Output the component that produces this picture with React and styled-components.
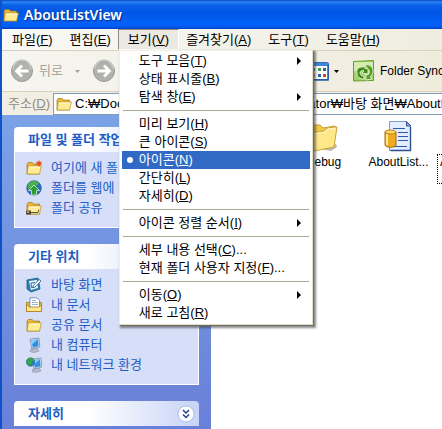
import React from 'react'
import styled, { createGlobalStyle } from 'styled-components'

const GlobalStyle = createGlobalStyle`
    * {
        box-sizing: border-box;
    }
    body {
        margin: 0;
        background: #fff;
    }
    body, button, input {
        font-family: "Liberation Sans", "Noto Sans CJK KR", sans-serif;
        font-size: 13px;
        line-height: 18px;
    }
`
const Window = styled.div`
    display: flex;
    flex-direction: column;
    min-height: 100vh;
    overflow: hidden;
    border-left: 2px solid #0d52c8;
    background: #fff;
`
const TitleBar = styled.header`
    display: flex;
    align-items: center;
    gap: 5px;
    height: 29px;
    padding-left: 1px;
    background: linear-gradient(#0a47c4 0, #2a86f5 2px, #0d62ea 5px, #0055e3 12px, #0260f6 22px, #0260fa 26px, #0141c0 29px);
`
const Title = styled.h1`
    margin: 0;
    color: #fff;
    font-family: "Noto Sans", sans-serif;
    font-size: 14px;
    font-weight: 600;
    line-height: 20px;
    text-shadow: 1px 1px 1px #0a2a8a;
`
const MenuBar = styled.nav`
    display: flex;
    height: 22px;
    border-bottom: 1px solid #d8d2bd;
    background: linear-gradient(90deg, #f8f8f6, #efede0);
`
const MenuWrap = styled.div`
    position: relative;
    display: flex;
    margin-right: -3px;
`
const MenuButton = styled.button`
    height: 21px;
    padding: 0 9px;
    border: 1px solid transparent;
    background: transparent;
    color: #000;
    line-height: 16px;
    white-space: nowrap;
    ${({open}) => open && `
        border-color: #8d8a80 #fff #fff #8d8a80;
        background: #ece9e2;
    `}
`
const Dropdown = styled.div`
    position: absolute;
    top: 100%;
    left: 1px;
    z-index: 2;
    width: 194px;
    padding: 1px 2px 2px;
    border: 1px solid #f1efe2;
    border-right-color: #dfdcc8;
    border-bottom-color: #dfdcc8;
    background: #fff;
    box-shadow: 1px 1px 0 #716f64, 2px 2px 2px 1px rgba(60, 60, 60, 0.6);
`
const DropdownItem = styled.button`
    display: grid;
    grid-template-columns: 17px 1fr 10px;
    align-items: center;
    width: 100%;
    height: 18px;
    padding: 0 3px 0 0;
    border: 0;
    background: ${({selected}) => selected ? '#316ac5' : 'transparent'};
    color: ${({selected}) => selected ? '#fff' : '#000'};
    text-align: left;
    white-space: nowrap;
`
const Bullet = styled.span`
    width: 6px;
    height: 6px;
    margin-left: 5px;
    border-radius: 50%;
    background: ${({on}) => on ? '#fff' : 'transparent'};
`
const Divider = styled.hr`
    height: 1px;
    margin: 4px 1px;
    border: 0;
    background: #aca899;
`
const ToolBar = styled.div`
    display: flex;
    align-items: center;
    justify-content: space-between;
    height: 41px;
    padding-left: 8px;
    border-bottom: 1px solid #d8d2bd;
    background: linear-gradient(90deg, #f6f5f0, #efecdc);
`
const ToolGroup = styled.div`
    display: flex;
    align-items: center;
    flex: none;
    gap: ${({gap}) => gap}px;
`
const ToolButton = styled.button`
    display: flex;
    align-items: center;
    gap: 5px;
    padding: 0;
    border: 0;
    background: transparent;
    color: ${({disabled}) => disabled ? '#a5a295' : '#000'};
    font-size: ${({small}) => small ? '12px' : '13px'};
    white-space: nowrap;
`
const SyncGroup = styled(ToolGroup)`
    width: 133px;
    overflow: hidden;
`
const ToolDivider = styled.span`
    width: 1px;
    height: 32px;
    background: #c9c5b2;
`
const AddressBar = styled.div`
    display: flex;
    align-items: center;
    gap: 5px;
    height: 23px;
    padding-left: 6px;
    background: #f1efe4;
`
const AddressLabel = styled.label`
    flex: none;
    width: 40px;
    color: #8f8c80;
    white-space: nowrap;
`
const AddressField = styled.div`
    display: flex;
    align-items: center;
    gap: 3px;
    flex: 1;
    min-width: 0;
    height: 22px;
    padding-left: 2px;
    border: 1px solid #7f9db9;
    border-right: 0;
    background: #fff;
`
const AddressInput = styled.input`
    flex: 1;
    min-width: 0;
    padding: 0;
    border: 0;
    outline: 0;
    background: transparent;
    color: #000;
`
const Content = styled.main`
    display: flex;
    flex: 1;
`
const SideBar = styled.aside`
    display: flex;
    flex-direction: column;
    flex: none;
    gap: 16px;
    width: 209px;
    padding: 12px 12px 0;
    background: linear-gradient(#7ba2e7, #6980d8);
`
const Panel = styled.section`
    overflow: hidden;
    border-radius: 4px 4px 0 0;
`
const PanelHeader = styled.div`
    display: flex;
    align-items: center;
    justify-content: space-between;
    height: 25px;
    padding: 0 4px 0 14px;
    background: linear-gradient(90deg, #fff 40%, #c6d3f7);
`
const PanelTitle = styled.h2`
    margin: 0;
    color: #215dc6;
    font-size: 13px;
    font-weight: 700;
    line-height: 18px;
    white-space: nowrap;
`
const ExpandButton = styled.button`
    display: flex;
    padding: 0;
    border: 0;
    background: transparent;
`
const TaskList = styled.ul`
    margin: 0;
    padding: 6px 0 9px 11px;
    border: 1px solid #fff;
    border-top: 0;
    background: #d6dff7;
    list-style: none;
`
const Task = styled.li`
    height: 20px;
`
const TaskLink = styled.a`
    display: flex;
    align-items: center;
    gap: 9px;
    height: 20px;
    color: #215dc6;
    text-decoration: none;
    white-space: nowrap;
`
const FileArea = styled.section`
    display: flex;
    flex: 1;
    min-width: 0;
    overflow: hidden;
    padding: 5px 0 0 75px;
`
const FileItem = styled.a`
    display: flex;
    flex-direction: column;
    align-items: center;
    flex: none;
    gap: 3px;
    width: 75px;
    color: #000;
    text-align: center;
    text-decoration: none;
`
const FileName = styled.span`
    max-width: 71px;
    outline: ${({focused}) => focused ? '1px dotted #000' : '0'};
    font-size: 12px;
    line-height: 14px;
    overflow-wrap: anywhere;
`

const FolderIcon = ({size = 16, children}) => (
  <svg width={size} height={size} viewBox="0 0 16 16" aria-hidden="true">
    <path d="M1 4.2 2.2 2.5h4l1.3 1.6h6V14H1z" fill="#e8b93c" stroke="#9c741a" strokeWidth=".7" />
    <path d="M2.2 6h13.2l-1.8 8H1.1z" fill="#ffec94" stroke="#b98d25" strokeWidth=".7" strokeLinejoin="round" />
    <path d="M3 7h11" stroke="#fffbd9" />
    {children}
  </svg>
)

const BigFolderIcon = () => (
  <svg width="32" height="32" viewBox="0 0 32 32" aria-hidden="true">
    <path d="M7 28 23 31l6-4-1-3z" fill="#b9b9b9" />
    <path d="M2 9 4 5h8l3 3 12-2 1 3-3 18-19 3z" fill="#efc74c" stroke="#c89b2a" />
    <path d="m3 13 13-2 3-3 10-1-3 20-20 4z" fill="#ffe88a" stroke="#d0a535" strokeLinejoin="round" />
    <path d="m5 14 12-2 3-3 7-1" fill="none" stroke="#fff8cf" />
  </svg>
)

const DatabaseFileIcon = () => (
  <svg width="32" height="32" viewBox="0 0 32 32" aria-hidden="true">
    <path d="M6.500 1.500h17l4 4v25h-21z" fill="#e3edff" stroke="#7f9bd0" />
    <path d="M23.500 1.500v4.500h4.500z" fill="#8aa7df" stroke="#39558f" />
    <path d="M27.500 7v23.500h-20" fill="none" stroke="#2e4e92" strokeWidth="1.400" />
    <path d="M10 8.500h12M15 12.500h10M15 16.500h10M15 20.500h10M10 26.500h14" stroke="#2d58b4" strokeWidth="1.200" />
    <path d="M2 12v13c1 3 10 3 11 0V12z" fill="#f0ac20" stroke="#a46c0a" />
    <path d="M4 14v11" stroke="#ffe69a" strokeWidth="2" />
    <ellipse cx="7.500" cy="12" rx="5.500" ry="2" fill="#ffd968" stroke="#b27a12" />
  </svg>
)

const NewFolderIcon = () => (
  <FolderIcon>
    <path d="m13 0 .9 2 2.100-.5-1 2 1 1.700-2.100-.3L13 7l-1-2.100-2 .3 1-1.700-1-2 2.100.5z" fill="#e8501c" />
  </FolderIcon>
)

const ShareFolderIcon = () => (
  <FolderIcon>
    <path d="M4 12.500h8l1-3" stroke="#555" fill="none" />
    <path d="M0 10.500h5v4H0z" fill="#5b4a2c" />
    <path d="M1 12h2M7 9.500h4" stroke="#f4eac6" />
  </FolderIcon>
)

const WebIcon = () => (
  <svg width="16" height="16" viewBox="0 0 16 16" aria-hidden="true">
    <circle cx="8" cy="8" r="7.300" fill="#2b6fc4" stroke="#1b478c" strokeWidth=".6" />
    <path d="M3 3c3-3 8-2 10 0l-2 3-3-1-2 3-4 1c-1-2 0-4 1-6z" fill="#4caf50" />
    <path d="m8 5 5.500 5.500h-3V15h-5v-4.500h-3z" fill="#2f9e35" stroke="#d5f2c8" strokeWidth=".8" />
  </svg>
)

const DesktopIcon = () => (
  <svg width="16" height="16" viewBox="0 0 16 16" aria-hidden="true">
    <path d="m1 3 11-2 2 11-9 3-4-3z" fill="#2b7fb5" stroke="#195a88" strokeWidth=".8" />
    <path d="m3 4 8-1 1 8-7 2z" fill="#e8f5fc" />
    <path d="m5 6 4-.6M5.500 10.500l4-.8M5 6l.5 4.500" stroke="#2470a2" />
    <path d="m7 9 6-6.500 2 1.500-6 6-2.200.8z" fill="#fff" stroke="#195a88" strokeWidth=".8" />
  </svg>
)

const DocumentsIcon = () => (
  <svg width="16" height="16" viewBox="0 0 16 16" aria-hidden="true">
    <path d="M.5 5.500h15v9H.5z" fill="#e9bd41" stroke="#9c741a" strokeWidth=".8" />
    <path d="M4 .8h7L13.500 3.300V11H4z" fill="#fff" stroke="#5c7da8" strokeWidth=".8" />
    <path d="M6 3.500h4M6 5.500h6M6 7.500h6" stroke="#7ba3d4" strokeWidth=".8" />
    <path d="M.5 7 3 10h10l2.500-2v6.500H.5z" fill="#ffe88a" stroke="#a97f20" strokeWidth=".8" />
  </svg>
)

const Monitor = () => (
  <>
    <path d="m5 12 6-1 2 3-5 1.500-4-1z" fill="#b9bdcb" stroke="#797f93" strokeWidth=".5" />
    <path d="m4 2 9-1 .8 9L6 12z" fill="#dfe5ef" stroke="#6d7f9f" strokeWidth=".7" />
    <path d="m5.300 3 6.700-.8.6 7L6.800 10.700z" fill="#2f91df" />
    <path d="m5.300 3 6.700-.8-5.700 5z" fill="#85ccfa" />
  </>
)

const ComputerIcon = () => (
  <svg width="16" height="16" viewBox="0 0 16 16" aria-hidden="true">
    <Monitor />
  </svg>
)

const NetworkIcon = () => (
  <svg width="16" height="16" viewBox="0 0 16 16" aria-hidden="true">
    <g transform="translate(2 0)">
      <Monitor />
    </g>
    <circle cx="4.500" cy="5" r="4.200" fill="#2678c9" stroke="#1c5e5a" strokeWidth=".5" />
    <path d="M2 2c2-2 5-1 6 1L6 5 5 8C3 9 1 7 .5 5z" fill="#37a645" />
  </svg>
)

const RoundArrow = ({forward}) => (
  <svg width="24" height="24" viewBox="0 0 24 24" aria-hidden="true">
    <circle cx="12" cy="12" r="10.500" fill="#b1b1ae" stroke="#999" />
    <path d="M3 10a9 9 0 0 1 18 0" fill="none" stroke="#c9c9c7" strokeWidth="1.500" />
    <path
      d="M18.500 12H7M12 6.500 6.500 12l5.500 5.500"
      fill="none"
      stroke="#fff"
      strokeWidth="2.800"
      transform={forward ? 'rotate(180 12 12)' : undefined}
    />
  </svg>
)

const DownArrow = ({color}) => (
  <svg width="5" height="3" viewBox="0 0 5 3" aria-hidden="true">
    <path d="M0 0h5L2.500 3z" fill={color} />
  </svg>
)

const SubmenuArrow = () => (
  <svg width="4" height="8" viewBox="0 0 4 8" aria-hidden="true">
    <path d="M0 0v8l4-4z" fill="currentColor" />
  </svg>
)

const ViewsIcon = () => (
  <svg width="20" height="20" viewBox="0 0 20 20" aria-hidden="true">
    <rect x=".5" y="1.500" width="19" height="17" rx="1" fill="#fff" stroke="#2f6cb8" />
    <path d="M1 2h18v3H1z" fill="#3d86db" />
    <path d="M19 4v15H2" fill="none" stroke="#245ca5" strokeWidth="1.500" />
    <path d="M3 7h3v3H3zM9 13h3v3H9z" fill="#3263b0" />
    <path d="M9 7h3v3H9z" fill="#3d9a4b" />
    <path d="M14 7h3v3h-3z" fill="#315fa8" />
    <path d="M3 13h3v3H3z" fill="#d07d2b" />
    <path d="M14 13h3v3h-3z" fill="#cf4c2a" />
  </svg>
)

const SyncIcon = () => (
  <svg width="22" height="22" viewBox="0 0 22 22" aria-hidden="true">
    <path d="M.5 1.500 20.500.5v20L.5 21z" fill="#a4cf6a" stroke="#65a02c" />
    <path d="M1 2h19v6C14 4 8 6 1 12z" fill="#d5ecb0" />
    <path d="M4 13a5 5 0 0 1 9-4l2-1v6l-6-1 2-2a2.500 2.500 0 0 0-4 2c0 2 2 3 4 3v3c-4 0-7-2-7-6z" fill="#3f8c1b" stroke="#f2fbe5" strokeWidth=".8" />
    <path d="M12 5c5-1 8 2 8 6 0 3-1 4-3 6l2 2-6 1v-6l2 1c2-2 2-5-1-7z" fill="#559f27" stroke="#f2fbe5" strokeWidth=".8" />
  </svg>
)

const ChevronsIcon = () => (
  <svg width="18" height="18" viewBox="0 0 18 18" aria-hidden="true">
    <circle cx="9" cy="9" r="8" fill="#fff" stroke="#aebde0" />
    <path d="m6 5 3 3 3-3M6 9.500l3 3 3-3" fill="none" stroke="#23408e" strokeWidth="1.500" />
  </svg>
)

const menus = [
  {label: '파일', hotkey: 'F'},
  {label: '편집', hotkey: 'E'},
  {label: '보기', hotkey: 'V', open: true},
  {label: '즐겨찾기', hotkey: 'A'},
  {label: '도구', hotkey: 'T'},
  {label: '도움말', hotkey: 'H'},
]

const viewMenu = [
  [
    {label: '도구 모음', hotkey: 'T', submenu: true},
    {label: '상태 표시줄', hotkey: 'B'},
    {label: '탐색 창', hotkey: 'E', submenu: true},
  ],
  [
    {label: '미리 보기', hotkey: 'H'},
    {label: '큰 아이콘', hotkey: 'S'},
    {label: '아이콘', hotkey: 'N', selected: true},
    {label: '간단히', hotkey: 'L'},
    {label: '자세히', hotkey: 'D'},
  ],
  [
    {label: '아이콘 정렬 순서', hotkey: 'I', submenu: true},
  ],
  [
    {label: '세부 내용 선택', hotkey: 'C', more: true},
    {label: '현재 폴더 사용자 지정', hotkey: 'F', more: true},
  ],
  [
    {label: '이동', hotkey: 'O', submenu: true},
    {label: '새로 고침', hotkey: 'R'},
  ],
]

const panels = [
  {
    title: '파일 및 폴더 작업',
    tasks: [
      {label: '여기에 새 폴더 만들기', Icon: NewFolderIcon},
      {label: '폴더를 웹에 게시', Icon: WebIcon},
      {label: '폴더 공유', Icon: ShareFolderIcon},
    ],
  },
  {
    title: '기타 위치',
    tasks: [
      {label: '바탕 화면', Icon: DesktopIcon},
      {label: '내 문서', Icon: DocumentsIcon},
      {label: '공유 문서', Icon: FolderIcon},
      {label: '내 컴퓨터', Icon: ComputerIcon},
      {label: '내 네트워크 환경', Icon: NetworkIcon},
    ],
  },
]

const Caption = ({item}) => (
  <span>{item.label}(<u>{item.hotkey}</u>){item.more && '...'}</span>
)

const ViewMenu = () => (
  <Dropdown role="menu">
    {viewMenu.map((group, i) => (
      <React.Fragment key={i}>
        {i > 0 && <Divider />}
        {group.map((item) => (
          <DropdownItem key={item.label} role="menuitem" selected={item.selected}>
            <Bullet on={item.selected} />
            <Caption item={item} />
            {item.submenu && <SubmenuArrow />}
          </DropdownItem>
        ))}
      </React.Fragment>
    ))}
  </Dropdown>
)

const App = () => {
  return (
    <>
      <GlobalStyle />
      <Window>
        <TitleBar>
          <FolderIcon />
          <Title>AboutListView</Title>
        </TitleBar>
        <MenuBar>
          {menus.map((menu) => (
            <MenuWrap key={menu.label}>
              <MenuButton open={menu.open}><Caption item={menu} /></MenuButton>
              {menu.open && <ViewMenu />}
            </MenuWrap>
          ))}
        </MenuBar>
        <ToolBar>
          <ToolGroup gap={12}>
            <ToolButton disabled><RoundArrow />뒤로</ToolButton>
            <DownArrow color="#a5a295" />
            <ToolButton disabled aria-label="앞으로"><RoundArrow forward /></ToolButton>
          </ToolGroup>
          <SyncGroup gap={7}>
            <ToolButton aria-label="보기"><ViewsIcon /><DownArrow color="#000" /></ToolButton>
            <ToolDivider />
            <ToolButton small><SyncIcon />Folder Sync</ToolButton>
          </SyncGroup>
        </ToolBar>
        <AddressBar>
          <AddressLabel htmlFor="address">주소(<u>D</u>)</AddressLabel>
          <AddressField>
            <FolderIcon />
            <AddressInput
              id="address"
              defaultValue="C:₩Documents and Settings₩Administrator₩바탕 화면₩AboutListView"
            />
          </AddressField>
        </AddressBar>
        <Content>
          <SideBar>
            {panels.map((panel) => (
              <Panel key={panel.title}>
                <PanelHeader><PanelTitle>{panel.title}</PanelTitle></PanelHeader>
                <TaskList>
                  {panel.tasks.map(({label, Icon}) => (
                    <Task key={label}>
                      <TaskLink href="#"><Icon />{label}</TaskLink>
                    </Task>
                  ))}
                </TaskList>
              </Panel>
            ))}
            <Panel>
              <PanelHeader>
                <PanelTitle>자세히</PanelTitle>
                <ExpandButton aria-label="펼치기"><ChevronsIcon /></ExpandButton>
              </PanelHeader>
            </Panel>
          </SideBar>
          <FileArea>
            <FileItem href="#"><BigFolderIcon /><FileName>Debug</FileName></FileItem>
            <FileItem href="#"><DatabaseFileIcon /><FileName>AboutList...</FileName></FileItem>
            <FileItem href="#"><DatabaseFileIcon /><FileName focused>AboutListView.cpp</FileName></FileItem>
          </FileArea>
        </Content>
      </Window>
    </>
  )
}

export default App
